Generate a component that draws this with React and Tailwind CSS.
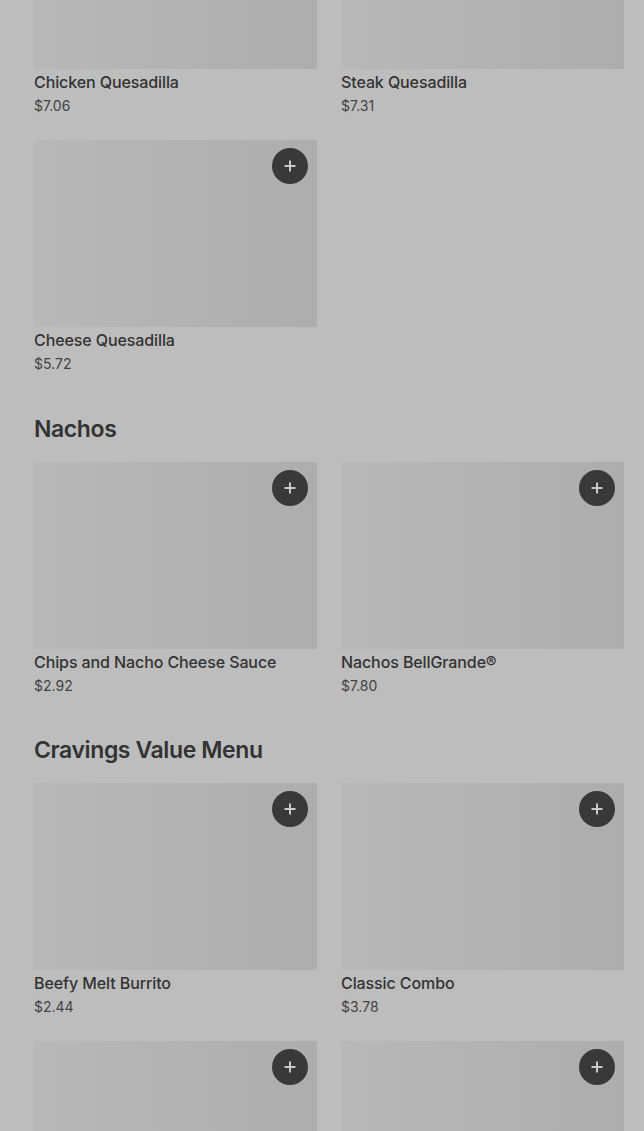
import React from 'react';

const sections = [
  {
    title: null,
    items: [
      { name: 'Chicken Quesadilla', price: '$7.06' },
      { name: 'Steak Quesadilla', price: '$7.31' },
      { name: 'Cheese Quesadilla', price: '$5.72' },
    ],
  },
  {
    title: 'Nachos',
    items: [
      { name: 'Chips and Nacho Cheese Sauce', price: '$2.92' },
      { name: 'Nachos BellGrande®', price: '$7.80' },
    ],
  },
  {
    title: 'Cravings Value Menu',
    items: [
      { name: 'Beefy Melt Burrito', price: '$2.44' },
      { name: 'Classic Combo', price: '$3.78' },
      { name: '', price: '' },
      { name: '', price: '' },
    ],
  },
];

const PlusIcon = () => (
  <svg width="14" height="14" viewBox="0 0 14 14" fill="none">
    <path d="M7 1.5v11M1.5 7h11" stroke="#c9c9c9" strokeWidth="2" />
  </svg>
);

const MenuCard = ({ item }) => (
  <div className="flex flex-col">
    <div className="relative h-[187px] w-full bg-gradient-to-r from-[#b8b8b8] to-[#adadad]">
      <button className="absolute top-2 right-[9px] flex h-9 w-9 items-center justify-center rounded-full bg-[#393939]">
        <PlusIcon />
      </button>
    </div>
    {item.name && (
      <>
        <div className="mt-px text-[16px] leading-6 font-medium tracking-[-0.1px] text-[#333333]">{item.name}</div>
        <div className="mt-[2px] text-[14px] leading-5 text-[#434343]">{item.price}</div>
      </>
    )}
  </div>
);

export default function App() {
  return (
    <div className="h-[1131px] overflow-hidden bg-[#bdbdbd]" style={{ fontFamily: 'Inter, "Noto Sans", sans-serif' }}>
      <div className="-mt-[118px] pl-[34px] pr-[20px]">
        {sections.map((section, i) => (
          <div key={i}>
            {section.title && (
              <h2 className="mt-[38.5px] mb-[17px] text-[23px] leading-8 font-semibold tracking-[-0.4px] text-[#333333]">
                {section.title}
              </h2>
            )}
            <div className="grid grid-cols-2 gap-x-6 gap-y-6">
              {section.items.map((item, j) => (
                <MenuCard key={j} item={item} />
              ))}
            </div>
          </div>
        ))}
      </div>
    </div>
  );
}
